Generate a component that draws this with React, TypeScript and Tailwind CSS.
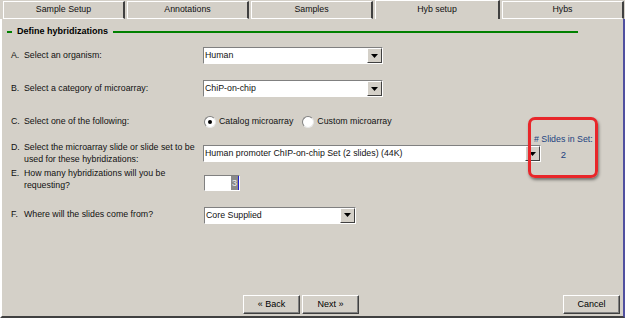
import { ReactNode } from 'react';

const tabs = ['Sample Setup', 'Annotations', 'Samples', 'Hyb setup', 'Hybs'];

function Arrow() {
  return (
    <div className="flex h-full w-[15px] items-center justify-center border border-t-white border-l-white border-r-[#404040] border-b-[#404040] bg-[#d4d0c8]">
      <svg width="7" height="4" viewBox="0 0 7 4">
        <path d="M0 0h7L3.5 4z" fill="#000" />
      </svg>
    </div>
  );
}

function Select({ value, width }: { value: string; width: string }) {
  return (
    <div
      className={`flex h-[17px] ${width} items-stretch border border-t-[#808080] border-l-[#808080] border-r-white border-b-white bg-white`}
    >
      <div className="flex flex-1 items-center overflow-hidden whitespace-nowrap pl-[1px] leading-none">{value}</div>
      <Arrow />
    </div>
  );
}

function Radio({ checked, label }: { checked?: boolean; label: string }) {
  return (
    <div className="flex items-center gap-[3px]">
      <div className="flex h-[12px] w-[12px] items-center justify-center rounded-full border border-t-[#808080] border-l-[#808080] border-r-[#e8e8e8] border-b-[#e8e8e8] bg-white">
        {checked ? <div className="h-[4px] w-[4px] rounded-full bg-black" /> : null}
      </div>
      <span>{label}</span>
    </div>
  );
}

function Row({ letter, children, className = '' }: { letter: string; children: ReactNode; className?: string }) {
  return (
    <div className={`flex w-[201px] shrink-0 pl-[9px] pr-[6px] ${className}`}>
      <span className="w-[13px] shrink-0">{letter}</span>
      <span>{children}</span>
    </div>
  );
}

function Button({ label, className = '' }: { label: string; className?: string }) {
  return (
    <button
      type="button"
      className={`h-[19px] w-[57px] border border-t-white border-l-white border-r-[#404040] border-b-[#404040] bg-[#d4d0c8] text-[9px] leading-none text-black shadow-[inset_-1px_-1px_0_#808080] ${className}`}
    >
      {label}
    </button>
  );
}

export default function App() {
  return (
    <div
      className="relative flex h-[318px] w-[625px] flex-col overflow-hidden bg-[#d4d0c8] text-[8.8px] text-[#111]"
      style={{ fontFamily: '"Liberation Sans", Arial, sans-serif' }}
    >
      <div className="flex h-[19px] shrink-0 items-end gap-[2px] pl-[3px]">
        {tabs.map((t) => {
          const active = t === 'Hyb setup';
          return (
            <div
              key={t}
              className={`flex items-center justify-center border-l border-t border-r-2 border-l-white border-t-white border-r-[#404040] ${
                active ? 'h-[19px] w-[125px] pb-[1px]' : 'h-[18px] w-[122px] border-b border-b-white'
              }`}
            >
              {t}
            </div>
          );
        })}
      </div>

      <div className="flex flex-1 flex-col border-l-2 border-r-2 border-b-2 border-l-white border-r-[#5050a0] border-b-[#404040]">
        <div className="mt-[6px] flex h-[14px] items-center pl-[5px] pr-[45px]">
          <div className="h-[2px] w-[5px] bg-[#008000]" />
          <span className="px-[5px] text-[9px] font-bold text-black">Define hybridizations</span>
          <div className="h-[2px] flex-1 bg-[#008000]" />
        </div>

        <div className="mt-[8px] flex h-[17px] items-center">
          <Row letter="A.">Select an organism:</Row>
          <Select value="Human" width="w-[180px]" />
        </div>

        <div className="mt-[16px] flex h-[17px] items-center">
          <Row letter="B.">Select a category of microarray:</Row>
          <Select value="ChiP-on-chip" width="w-[180px]" />
        </div>

        <div className="mt-[18px] flex h-[14px] items-center">
          <Row letter="C.">Select one of the following:</Row>
          <div className="flex items-center gap-[9px] pl-[1px]">
            <Radio checked label="Catalog microarray" />
            <Radio label="Custom microarray" />
          </div>
        </div>

        <div className="mt-[12px] flex h-[24px] items-start">
          <Row letter="D." className="leading-[12px]">
            Select the microarray slide or slide set to be used for these hybridizations:
          </Row>
          <div className="mt-[4px]">
            <Select value="Human promoter ChIP-on-chip Set (2 slides) (44K)" width="w-[338px]" />
          </div>
          <div className="relative -ml-[7px] -mt-[9px] flex flex-col items-center leading-[15px] text-[#22427f]">
            <span>#&nbsp;Slides in Set:</span>
            <span className="text-[9.5px]">2</span>
          </div>
        </div>

        <div className="mt-[2px] flex h-[24px] items-start">
          <Row letter="E." className="leading-[12px]">
            How many hybridizations will you be requesting?
          </Row>
          <div className="ml-[1px] mt-[8px] flex h-[16px] w-[36px] border border-t-[#808080] border-l-[#808080] border-r-white border-b-white bg-white">
            <div className="flex-1" />
            <div className="flex w-[8px] items-center justify-center border-r border-r-[#2020d0] bg-[#8a8a8a] text-[9px] leading-none text-[#eee]">
              3
            </div>
          </div>
        </div>

        <div className="mt-[16px] flex h-[16px] items-center">
          <Row letter="F.">Where will the slides come from?</Row>
          <div className="ml-[1px]">
            <Select value="Core Supplied" width="w-[152px]" />
          </div>
        </div>

        <div className="mt-auto mb-[2px] flex items-center pl-[241px] pr-[3px]">
          <Button label="« Back" />
          <Button label="Next »" className="ml-[2px]" />
          <div className="flex-1" />
          <Button label="Cancel" />
        </div>
      </div>

      <div className="pointer-events-none absolute left-[528px] top-[117px] h-[61px] w-[70px] rounded-[7px] border-[3px] border-[#e8262a] shadow-[1px_2px_3px_rgba(0,0,0,0.45)]" />
    </div>
  );
}
